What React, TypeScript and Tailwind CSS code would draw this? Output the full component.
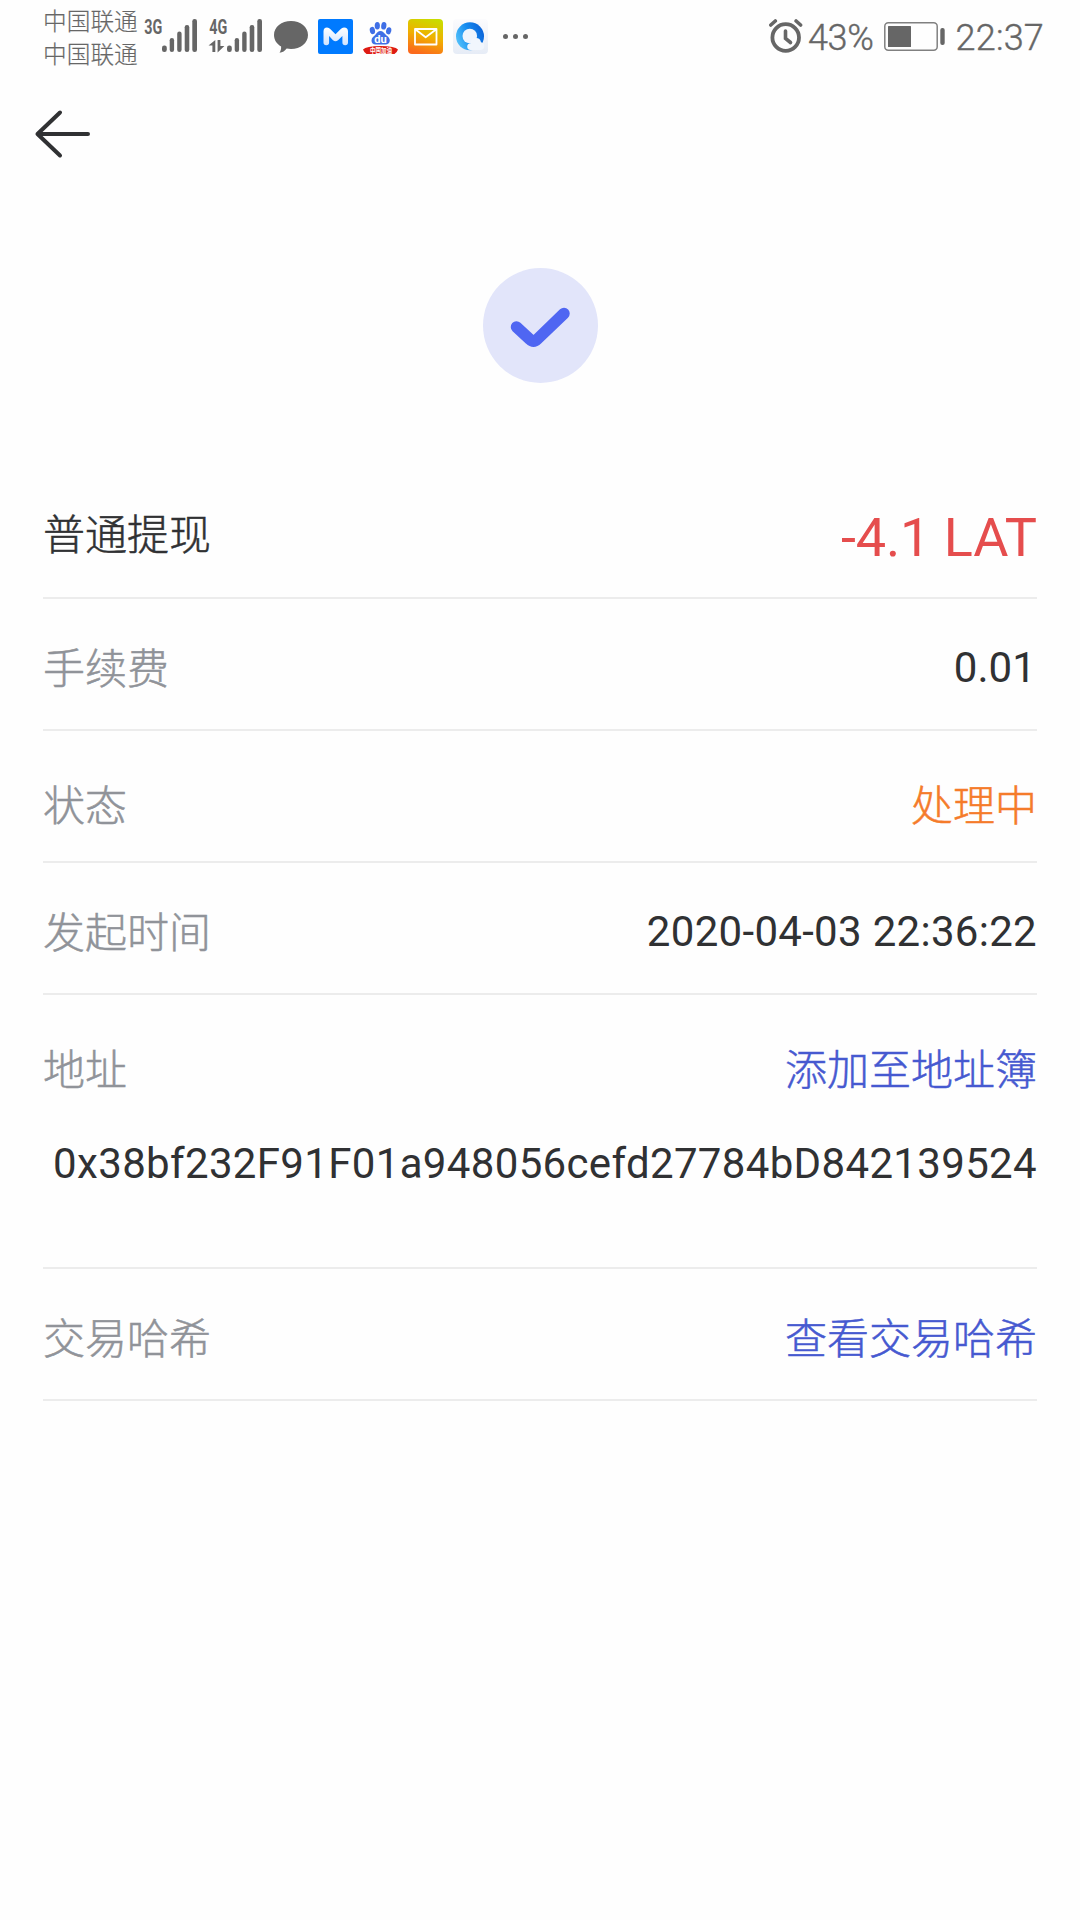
import React from 'react';

const SignalIcon = ({ label, data }: { label: string; data?: boolean }) => {
    return (
        <svg width="54" height="40" viewBox="0 -4 54 40" fill="#666666" className="overflow-visible">
            <text x="0.300" y="15.500" fontFamily="Roboto, sans-serif" fontWeight="700" fontSize="19.500" textLength="18" lengthAdjust="spacingAndGlyphs">{label}</text>
            {data && <path d="M6.300 22v12H3.400v-6.500H-.5zM8.600 22h2.800v6h4L8.600 34.500z" />}
            <rect x="18" y="27.500" width="4.800" height="6.500" rx="2.200" />
            <rect x="25.700" y="20" width="4.400" height="14" rx="2.200" />
            <rect x="33.200" y="13.500" width="4.400" height="20.500" rx="2.200" />
            <rect x="40.700" y="7" width="4.600" height="27" rx="2.200" />
            <rect x="48.300" y="1" width="4.700" height="33" rx="2.200" />
        </svg>
    );
};

const ChatIcon = () => (
    <svg width="34" height="32" viewBox="0 0 34 32" fill="#666666">
        <path d="M17 0C26.500 0 34 6 34 14s-7.500 14-17 14c-1.500 0-3-.2-4.300-.5C11 29.800 8.500 31.600 5.500 31.800c1.200-1.700 1.800-4 1.600-6.300C2.800 23 0 19 0 14 0 6 7.500 0 17 0z" />
    </svg>
);

const MailMasterIcon = () => (
    <svg width="35" height="35" viewBox="0 0 35 35">
        <defs>
            <linearGradient id="mFill" x1="0" y1="0" x2="0" y2="1">
                <stop offset="0" stopColor="#ffffff" />
                <stop offset="1" stopColor="#cfe3ff" />
            </linearGradient>
        </defs>
        <rect width="35" height="35" rx="2" fill="#007aff" />
        <path d="M5.500 12.500Q5.500 8.500 9 8.500q2 0 3.500 1.800l5 5 5-5q1.500-1.800 3.500-1.800 4 0 4 4V23.500a2.800 2.800 0 0 1-5.600 0V17l-4.400 4.200q-2.500 2-5 0L11.100 17v6.500a2.800 2.800 0 0 1-5.600 0z" fill="url(#mFill)" />
    </svg>
);

const BaiduIcon = () => (
    <svg width="35" height="35" viewBox="0 0 35 35">
        <g fill="#3f6fe6">
            <ellipse cx="9.400" cy="11.500" rx="2.600" ry="3.700" transform="rotate(-12 9.400 11.500)" />
            <ellipse cx="14.300" cy="6.800" rx="2.600" ry="3.800" />
            <ellipse cx="20.800" cy="6.800" rx="2.600" ry="3.800" transform="rotate(8 20.800 6.800)" />
            <ellipse cx="25.700" cy="11.800" rx="2.600" ry="3.600" transform="rotate(12 25.700 11.800)" />
            <path d="M17.500 12c2.200 0 3.300 1.500 4.600 3.100 1.700 1.900 4.700 3.400 4.700 6.400 0 2.700-2 3.900-4.300 3.900h-9.800c-2.600 0-4.200-1.500-4.200-4 0-2.700 2.600-4.100 4.300-6.100 1.300-1.600 2.400-3.300 4.700-3.300z" />
        </g>
        <text x="11.300" y="24" fontFamily="Roboto, sans-serif" fontWeight="700" fontSize="10" fill="#ffffff" textLength="12.500" lengthAdjust="spacingAndGlyphs">du</text>
        <path d="M0 30.500Q3 27.200 17.500 27 32 27.200 35 30.500q-.5 2-3.500 4.500H3.500Q.5 32.500 0 30.500z" fill="#de1b12" />
        <text x="7" y="33.600" fontFamily="'Noto Sans CJK SC', sans-serif" fontWeight="700" fontSize="6.500" fill="#ffffff" textLength="22" lengthAdjust="spacingAndGlyphs">中国加油</text>
    </svg>
);

const EnvelopeIcon = () => (
    <svg width="35" height="35" viewBox="0 0 35 35">
        <defs>
            <linearGradient id="mailBg" x1="0.700" y1="0" x2="0.400" y2="1">
                <stop offset="0" stopColor="#c9dc00" />
                <stop offset="0.500" stopColor="#f0b000" />
                <stop offset="1" stopColor="#fb6a1c" />
            </linearGradient>
        </defs>
        <rect width="35" height="35" rx="4" fill="url(#mailBg)" />
        <path d="M7 10h21.500v15.500H7zM7.500 10.500l10.200 7.800L28 10.500" fill="none" stroke="#ffffff" strokeWidth="1.800" strokeLinejoin="round" />
    </svg>
);

const BrowserIcon = () => (
    <svg width="35" height="35" viewBox="0 0 35 35">
        <defs>
            <linearGradient id="qFill" x1="0" y1="0.700" x2="1" y2="0.300">
                <stop offset="0" stopColor="#55c3fa" />
                <stop offset="0.500" stopColor="#168cf0" />
                <stop offset="1" stopColor="#0b62d8" />
            </linearGradient>
            <linearGradient id="qBg" x1="0" y1="0" x2="0" y2="1">
                <stop offset="0" stopColor="#fbfbfd" />
                <stop offset="1" stopColor="#e6ecf6" />
            </linearGradient>
        </defs>
        <rect width="35" height="35" rx="4" fill="url(#qBg)" />
        <circle cx="17" cy="17.300" r="14" fill="url(#qFill)" />
        <circle cx="16.800" cy="17" r="7.300" fill="#eef4fd" />
        <path d="M17.500 31q-3.300-.3-3.300-3.300 0-3 3.300-3.400.5-5.300 5.500-5.300 4.300 0 5 4.300 3.300.5 3.300 3.800T28 31z" fill="#f1f6fd" />
    </svg>
);

const AlarmIcon = () => (
    <svg width="34" height="34" viewBox="0 0 34 34" fill="none" stroke="#666666" strokeLinecap="round">
        <circle cx="16.700" cy="18.500" r="13.300" strokeWidth="3.800" />
        <path d="M16.500 12v7.300l5 4.200" strokeWidth="3.600" />
        <path d="M1.800 6l4.500-4M31.600 6l-4.500-4" strokeWidth="3.600" />
    </svg>
);

const BatteryIcon = () => (
    <svg width="61" height="30" viewBox="0 0 61 30">
        <rect x="0.800" y="0.800" width="52.400" height="27.400" rx="3.500" fill="none" stroke="#808080" strokeWidth="1.500" />
        <rect x="4" y="4" width="23" height="21" rx="0.500" fill="#666666" />
        <rect x="56.300" y="6" width="4.400" height="17" rx="2" fill="#666666" />
    </svg>
);

const StatusBar = () => {
    return (
        <div className="flex h-[74px] items-start text-[#666666]">
            <div className="ml-[43px] mt-[6px] w-[101px] text-[23.7px] leading-[33px] font-light [-webkit-text-stroke:0.15px]">
                <p>中国联通</p>
                <p>中国联通</p>
            </div>
            <div className="mt-[14px] flex gap-[11px]">
                <SignalIcon label="3G" />
                <SignalIcon label="4G" data />
            </div>
            <div className="mt-[19px] ml-[11px] flex gap-[10px]">
                <div className="pt-[2px]"><ChatIcon /></div>
                <MailMasterIcon />
                <BaiduIcon />
                <EnvelopeIcon />
                <BrowserIcon />
            </div>
            <div className="mt-[34px] ml-[15px] flex gap-[5px]">
                <span className="size-[5px] rounded-full bg-[#666666]"></span>
                <span className="size-[5px] rounded-full bg-[#666666]"></span>
                <span className="size-[5px] rounded-full bg-[#666666]"></span>
            </div>
            <div className="mr-[36px] ml-auto flex items-start text-[36px] leading-[40px] font-light">
                <div className="mt-[19px]"><AlarmIcon /></div>
                <span className="mt-[18px] ml-[5px] tracking-[-0.3px] [-webkit-text-stroke:0.4px]">43%</span>
                <div className="mt-[22px] ml-[10px]"><BatteryIcon /></div>
                <span className="mt-[18px] ml-[11px] tracking-[0.2px] [-webkit-text-stroke:0.4px]">22:37</span>
            </div>
        </div>
    );
};

const App = () => {
    return (
        <div className="h-[1920px] w-[1080px] overflow-hidden bg-[#fefefe] font-['Roboto','Noto_Sans_CJK_SC',sans-serif] text-[42px] leading-[60px] text-[#303133]">
            <StatusBar />

            <div className="h-[194px] pt-[35px] pl-[34px]">
                <svg width="58" height="50" viewBox="0 0 58 50" fill="none" stroke="#303133" strokeWidth="4" strokeLinecap="round" strokeLinejoin="round">
                    <path d="M26 3.500L3.500 25 26 46.500M3.500 25H54" />
                </svg>
            </div>

            <div className="flex h-[199px] justify-center">
                <div className="flex size-[115px] items-center justify-center rounded-full bg-[#e2e5fa]">
                    <svg width="115" height="115" viewBox="0 0 115 115" fill="none" stroke="#4f66f2" strokeWidth="11.500" strokeLinecap="round" strokeLinejoin="round">
                        <path d="M33.500 59L47 71.500Q50.500 75 54 71.500L81 45.500" />
                    </svg>
                </div>
            </div>

            <div className="mx-[43px]">
                <div className="flex h-[132px] items-start justify-between border-b-2 border-[#ececec]">
                    <p className="pt-[39px] font-light [-webkit-text-stroke:0.5px]">普通提现</p>
                    <p className="pt-[41px] text-[54px] tracking-[-0.1px] text-[#e54d4d]">-4.1 LAT</p>
                </div>
                <div className="flex h-[132px] items-start justify-between border-b-2 border-[#ececec]">
                    <p className="pt-[41px] font-light text-[#909399] [-webkit-text-stroke:0.5px]">手续费</p>
                    <p className="pt-[39px] pr-px tracking-[0.1px]">0.01</p>
                </div>
                <div className="flex h-[132px] items-start justify-between border-b-2 border-[#ececec]">
                    <p className="pt-[46px] font-light text-[#909399] [-webkit-text-stroke:0.5px]">状态</p>
                    <p className="pt-[46px] font-light text-[#f57b2a] [-webkit-text-stroke:0.5px]">处理中</p>
                </div>
                <div className="flex h-[132px] items-start justify-between border-b-2 border-[#ececec]">
                    <p className="pt-[41px] font-light text-[#909399] [-webkit-text-stroke:0.5px]">发起时间</p>
                    <p className="pt-[39px] tracking-[0.3px]">2020-04-03 22:36:22</p>
                </div>
                <div className="h-[274px] border-b-2 border-[#ececec]">
                    <div className="flex justify-between pt-[46px] font-light [-webkit-text-stroke:0.5px]">
                        <p className="text-[#909399]">地址</p>
                        <p className="text-[#4659d0]">添加至地址簿</p>
                    </div>
                    <p className="pt-[33px] text-right tracking-[0.34px] whitespace-nowrap">0x38bf232F91F01a948056cefd27784bD842139524</p>
                </div>
                <div className="flex h-[132px] items-start justify-between border-b-2 border-[#ececec] font-light [-webkit-text-stroke:0.5px]">
                    <p className="pt-[41px] text-[#909399]">交易哈希</p>
                    <p className="pt-[41px] text-[#4659d0]">查看交易哈希</p>
                </div>
            </div>
        </div>
    );
};

export default App;
